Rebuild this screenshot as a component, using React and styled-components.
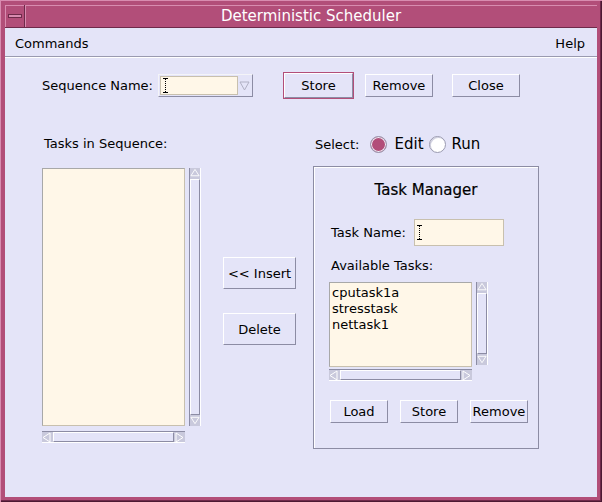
import React from 'react'
import styled, { createGlobalStyle } from 'styled-components'

const GlobalStyle = createGlobalStyle`
    html, body {
        margin: 0;
        padding: 0;
        width: 602px;
        height: 502px;
        overflow: hidden;
        background: #e4e4f8;
    }
    * {
        box-sizing: border-box;
    }
`

const Frame = styled.div`
    width: 602px;
    height: 502px;
    padding: 5px;
    background: #b24e79;
    box-shadow: inset 1px 1px 0 #d88cb0, inset -1px -1px 0 #4c1a33, inset -2px -2px 0 #6e2a4a;
    display: flex;
    flex-direction: column;
    font-family: "DejaVu Sans", "Liberation Sans", sans-serif;
    font-size: 13px;
    color: #000;
`

const TitleBar = styled.div`
    height: 23px;
    display: flex;
    background: #b24e79;
    border-bottom: 1px solid #6e2a4a;
`

const MinBox = styled.div`
    width: 20px;
    height: 22px;
    border-right: 1px solid #6e2a4a;
    box-shadow: inset 1px 1px 0 #d88cb0;
    display: flex;
    align-items: center;
    justify-content: center;
`

const MinBar = styled.div`
    width: 14px;
    height: 4px;
    background: #d88cb0;
    border: 1px solid #6e2a4a;
`

const Title = styled.div`
    flex: 1;
    text-align: center;
    color: #fff;
    font-size: 15px;
    line-height: 22px;
    box-shadow: inset 1px 1px 0 #d88cb0;
`

const Client = styled.div`
    flex: 1;
    display: flex;
    flex-direction: column;
    background: #e4e4f8;
`

const MenuBar = styled.div`
    height: 29px;
    display: flex;
    justify-content: space-between;
    align-items: center;
    padding: 0 12px 0 10px;
    border-bottom: 1px solid #9a9ab0;
    box-shadow: 0 1px 0 #fff;
`

const MenuItem = styled.span`
    font-size: 13px;
    padding-top: 2px;
`

const Content = styled.div`
    flex: 1;
    display: flex;
    flex-direction: column;
    padding-top: 16px;
`

const TopRow = styled.div`
    display: flex;
    align-items: center;
    height: 25px;
    padding-left: 37px;
`

const Label = styled.span`
    font-size: 13px;
    white-space: nowrap;
    margin-left: ${(p) => p.$ml || 0}px;
`

const Combo = styled.div`
    display: flex;
    align-items: center;
    margin-left: 5px;
    height: 23px;
    padding: 1px;
    border-top: 1px solid #f4f4f8;
    border-left: 1px solid #f4f4f8;
    border-bottom: 1px solid #8c8ca4;
    border-right: 1px solid #8c8ca4;
`

const Field = styled.div`
    width: ${(p) => p.$w}px;
    height: ${(p) => p.$h}px;
    margin-left: ${(p) => p.$ml || 0}px;
    background: #fff7e8;
    border: 1px solid #c8c0ae;
    display: flex;
    align-items: center;
    padding-left: 2px;
`

const ComboArrow = styled.div`
    width: 13px;
    height: 19px;
    display: flex;
    align-items: center;
    justify-content: center;
`

const Button = styled.div`
    width: ${(p) => p.$w}px;
    height: ${(p) => p.$h}px;
    margin-left: ${(p) => p.$ml || 0}px;
    margin-top: ${(p) => p.$mt || 0}px;
    display: flex;
    align-items: center;
    justify-content: center;
    font-size: 13px;
    background: #e4e4f8;
    border-top: 1px solid #fff;
    border-left: 1px solid #fff;
    border-bottom: 1px solid #8c8ca4;
    border-right: 1px solid #8c8ca4;
    outline: ${(p) => (p.$focus ? '1px solid #b24e79' : 'none')};
    outline-offset: 0;
`

const Body = styled.div`
    display: flex;
    align-items: flex-start;
    padding-left: 37px;
    margin-top: 37px;
`

const LeftCol = styled.div`
    width: 159px;
    display: flex;
    flex-direction: column;
`

const ColLabel = styled.div`
    height: 33px;
    line-height: 18px;
    padding-left: 2px;
`

const ListRow = styled.div`
    display: flex;
    gap: 4px;
    margin-top: ${(p) => p.$mt || 0}px;
`

const ListBox = styled.div`
    width: 143px;
    height: ${(p) => p.$h}px;
    background: #fff7e8;
    border: 1px solid #c8c0ae;
    border-top-color: #a8a8a8;
    border-left-color: #a8a8a8;
    padding: 2px 2px;
    font-size: 13px;
    line-height: 16px;
`

const VScroll = styled.div`
    width: 12px;
    height: ${(p) => p.$h}px;
    display: flex;
    flex-direction: column;
    border-left: 1px solid #8c8ca4;
    border-right: 1px solid #fff;
`

const HScroll = styled.div`
    width: 143px;
    height: 12px;
    margin-top: ${(p) => p.$mt}px;
    display: flex;
    border-top: 1px solid #8c8ca4;
    border-bottom: 1px solid #fff;
`

const ArrowCell = styled.div`
    flex: 0 0 11px;
    background: #c9c9dc;
    display: flex;
    align-items: center;
    justify-content: center;
`

const Thumb = styled.div`
    flex: 1;
    background: #e4e4f8;
    border-top: 1px solid #fff;
    border-left: 1px solid #fff;
    border-bottom: 1px solid #8c8ca4;
    border-right: 1px solid #8c8ca4;
`

const MidCol = styled.div`
    width: 73px;
    margin-left: 22px;
    padding-top: 122px;
    display: flex;
    flex-direction: column;
`

const RightCol = styled.div`
    width: 226px;
    margin-left: 17px;
    display: flex;
    flex-direction: column;
`

const SelectRow = styled.div`
    height: 31px;
    display: flex;
    align-items: center;
    padding-left: 2px;
    padding-bottom: 13px;
`

const RadioLabel = styled.span`
    font-size: 15px;
    margin-left: ${(p) => p.$ml}px;
`

const Radio = styled.span`
    width: 17px;
    height: 17px;
    margin-left: ${(p) => p.$ml}px;
    border-radius: 50%;
    border: 1px solid #9a9ab0;
    background: ${(p) => (p.$on ? '#b24e79' : '#fff')};
    box-shadow: ${(p) => (p.$on ? 'inset 0 0 0 1px #f0f0f8' : 'inset 1px 1px 0 #d0d0e0')};
`

const ManagerBox = styled.div`
    width: 226px;
    height: 283px;
    border: 1px solid #8c8ca4;
    box-shadow: inset 1px 1px 0 #fff;
    display: flex;
    flex-direction: column;
    padding: 13px 0 0 15px;
`

const BoxTitle = styled.div`
    text-align: center;
    font-size: 15px;
    font-weight: 500;
    line-height: 20px;
    padding-right: 15px;
    -webkit-text-stroke: 0.2px #000;
`

const FieldRow = styled.div`
    display: flex;
    align-items: center;
    margin-top: 19px;
    padding-left: 2px;
`

const SubLabel = styled.div`
    margin-top: 11px;
    line-height: 18px;
    padding-left: 2px;
`

const ButtonRow = styled.div`
    display: flex;
    gap: 12px;
    margin-top: 19px;
    padding-left: 1px;
`

const Cursor = () => (
    <svg width="5" height="15" viewBox="0 0 5 15">
        <path d="M0 0.5h5M0 14.5h5" stroke="#000" strokeWidth="1" />
        <path d="M2.5 1v13" stroke="#000" strokeWidth="1" strokeDasharray="1 1" />
    </svg>
)

const Tri = ({ dir }) => {
    const pts = {
        up: '1,8 5.5,1 10,8',
        down: '1,2 5.5,9 10,2',
        left: '8,1 1,5.5 8,10',
        right: '2,1 9,5.5 2,10',
    }[dir]
    return (
        <svg width="11" height="11" viewBox="0 0 11 11">
            <polygon points={pts} fill="none" stroke="#fff" strokeWidth="1" />
        </svg>
    )
}

const VBar = ({ h }) => (
    <VScroll $h={h}>
        <ArrowCell><Tri dir="up" /></ArrowCell>
        <Thumb />
        <ArrowCell><Tri dir="down" /></ArrowCell>
    </VScroll>
)

const HBar = ({ mt }) => (
    <HScroll $mt={mt}>
        <ArrowCell><Tri dir="left" /></ArrowCell>
        <Thumb />
        <ArrowCell><Tri dir="right" /></ArrowCell>
    </HScroll>
)

const tasks = ['cputask1a', 'stresstask', 'nettask1']

const App = () => {
    return (
        <>
            <GlobalStyle />
            <Frame>
                <TitleBar>
                    <MinBox><MinBar /></MinBox>
                    <Title>Deterministic Scheduler</Title>
                </TitleBar>
                <Client>
                    <MenuBar>
                        <MenuItem>Commands</MenuItem>
                        <MenuItem>Help</MenuItem>
                    </MenuBar>
                    <Content>
                        <TopRow>
                            <Label>Sequence Name:</Label>
                            <Combo>
                                <Field $w={78} $h={19}><Cursor /></Field>
                                <ComboArrow>
                                    <svg width="11" height="11" viewBox="0 0 11 11">
                                        <polygon points="1,2 5.5,10 10,2" fill="none" stroke="#b0b0c4" strokeWidth="1" />
                                    </svg>
                                </ComboArrow>
                            </Combo>
                            <Button $w={69} $h={25} $ml={31} $focus>Store</Button>
                            <Button $w={68} $h={23} $ml={12}>Remove</Button>
                            <Button $w={68} $h={23} $ml={19}>Close</Button>
                        </TopRow>
                        <Body>
                            <LeftCol>
                                <ColLabel>Tasks in Sequence:</ColLabel>
                                <ListRow>
                                    <ListBox $h={258} />
                                    <VBar h={258} />
                                </ListRow>
                                <HBar mt={5} />
                            </LeftCol>
                            <MidCol>
                                <Button $w={73} $h={32}>&lt;&lt; Insert</Button>
                                <Button $w={73} $h={32} $mt={24}>Delete</Button>
                            </MidCol>
                            <RightCol>
                                <SelectRow>
                                    <Label>Select:</Label>
                                    <Radio $on $ml={11} />
                                    <RadioLabel $ml={7}>Edit</RadioLabel>
                                    <Radio $ml={5} />
                                    <RadioLabel $ml={6}>Run</RadioLabel>
                                </SelectRow>
                                <ManagerBox>
                                    <BoxTitle>Task Manager</BoxTitle>
                                    <FieldRow>
                                        <Label>Task Name:</Label>
                                        <Field $w={90} $h={27} $ml={8}><Cursor /></Field>
                                    </FieldRow>
                                    <SubLabel>Available Tasks:</SubLabel>
                                    <ListRow $mt={7}>
                                        <ListBox $h={85}>
                                            {tasks.map((t) => <div key={t}>{t}</div>)}
                                        </ListBox>
                                        <VBar h={83} />
                                    </ListRow>
                                    <HBar mt={2} />
                                    <ButtonRow>
                                        <Button $w={58} $h={23}>Load</Button>
                                        <Button $w={58} $h={23}>Store</Button>
                                        <Button $w={58} $h={23}>Remove</Button>
                                    </ButtonRow>
                                </ManagerBox>
                            </RightCol>
                        </Body>
                    </Content>
                </Client>
            </Frame>
        </>
    )
}

export default App
